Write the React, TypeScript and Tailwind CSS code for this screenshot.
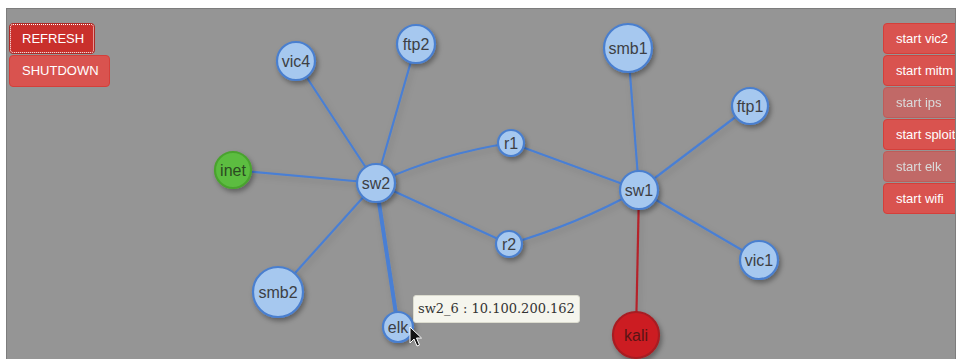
import React from 'react';

type GraphNode = { id: string; x: number; y: number; r: number; kind?: 'inet' | 'kali' };

const NODES: GraphNode[] = [
  { id: 'vic4', x: 296, y: 61, r: 19 },
  { id: 'ftp2', x: 416, y: 44, r: 19 },
  { id: 'smb1', x: 628, y: 48, r: 24 },
  { id: 'ftp1', x: 750, y: 106, r: 18 },
  { id: 'r1', x: 511, y: 143, r: 13 },
  { id: 'inet', x: 233, y: 170, r: 18, kind: 'inet' },
  { id: 'sw2', x: 376, y: 183, r: 19 },
  { id: 'sw1', x: 639, y: 190, r: 19 },
  { id: 'r2', x: 509, y: 244, r: 13 },
  { id: 'vic1', x: 759, y: 260, r: 19 },
  { id: 'smb2', x: 278, y: 292, r: 25 },
  { id: 'elk', x: 398, y: 327, r: 15 },
  { id: 'kali', x: 636, y: 335, r: 23, kind: 'kali' },
];

// [from, to, width, bend]  bend = offset of the control point along the normal
const EDGES: [string, string, number, number][] = [
  ['sw2', 'vic4', 2.2, 0],
  ['sw2', 'ftp2', 2.2, 0],
  ['sw2', 'inet', 2.2, 0],
  ['sw2', 'r1', 2.2, 10],
  ['sw2', 'r2', 2.2, 0],
  ['sw2', 'smb2', 2.2, 0],
  ['sw2', 'elk', 4, 0],
  ['sw1', 'smb1', 2.2, 0],
  ['sw1', 'ftp1', 2.2, 0],
  ['sw1', 'r1', 2.2, 0],
  ['r2', 'sw1', 2.2, -8],
  ['sw1', 'vic1', 2.2, 0],
];

const RIGHT_BUTTONS = [
  { label: 'start vic2', disabled: false },
  { label: 'start mitm', disabled: false },
  { label: 'start ips', disabled: true },
  { label: 'start sploit', disabled: false },
  { label: 'start elk', disabled: true },
  { label: 'start wifi', disabled: false },
];

const byId = (id: string) => NODES.find(n => n.id === id)!;

const edgePath = (a: GraphNode, b: GraphNode, bend: number) => {
  if (!bend) return `M${a.x} ${a.y} L${b.x} ${b.y}`;
  const dx = b.x - a.x;
  const dy = b.y - a.y;
  const len = Math.hypot(dx, dy);
  // normal pointing "left" of the direction a->b
  const nx = dy / len;
  const ny = -dx / len;
  const cx = (a.x + b.x) / 2 + nx * bend;
  const cy = (a.y + b.y) / 2 + ny * bend;
  return `M${a.x} ${a.y} Q${cx} ${cy} ${b.x} ${b.y}`;
};

const Graph: React.FC = () => {
  const sw1 = byId('sw1');
  const kali = byId('kali');
  return (
    <svg className="absolute inset-0" width={950} height={351} viewBox="7 9 950 351">
      <defs>
        <filter id="shadow" x="-50%" y="-50%" width="200%" height="200%">
          <feDropShadow dx="2" dy="3" stdDeviation="2.5" floodColor="#000" floodOpacity="0.35" />
        </filter>
        <filter id="lineShadow" x="-20%" y="-20%" width="140%" height="140%">
          <feDropShadow dx="2" dy="3" stdDeviation="3" floodColor="#000" floodOpacity="0.15" />
        </filter>
      </defs>
      <g filter="url(#lineShadow)" fill="none">
        {EDGES.map(([a, b, w, bend]) => (
          <path key={a + b} d={edgePath(byId(a), byId(b), bend)} stroke="#4a7fd4" strokeWidth={w} />
        ))}
        <line x1={sw1.x} y1={sw1.y} x2={kali.x} y2={kali.y} stroke="#b5232a" strokeWidth={2.2} />
      </g>
      {NODES.map(n => {
        const fill = n.kind === 'inet' ? '#5cbd40' : n.kind === 'kali' ? '#cc1d24' : '#a6c8ef';
        const stroke = n.kind === 'inet' ? '#4aa32f' : n.kind === 'kali' ? '#a81c20' : '#4a7fcf';
        const text = n.kind === 'inet' ? '#2b4a22' : n.kind === 'kali' ? '#5a1414' : '#3d3f44';
        return (
          <g key={n.id}>
            <circle cx={n.x} cy={n.y} r={n.r} fill={fill} stroke={stroke} strokeWidth={2.2} filter="url(#shadow)" />
            <text
              x={n.x}
              y={n.y + 5.5}
              textAnchor="middle"
              fontFamily="'Liberation Sans', Arial, sans-serif"
              fontSize={16}
              fill={text}
            >
              {n.id}
            </text>
          </g>
        );
      })}
      <path
        d="M410 327 L410 343 L414 339 L417 346 L419.5 345 L416.5 338 L421.5 338 Z"
        fill="#111"
        stroke="#fff"
        strokeWidth={1}
      />
    </svg>
  );
};

const App: React.FC = () => {
  return (
    <div className="h-[359px] w-[960px] bg-white overflow-hidden font-['Liberation_Sans',Arial,sans-serif]">
      <div className="relative ml-[6px] mt-[8px] h-[360px] w-[950px] overflow-hidden border border-[#7d7d7d] bg-[#959595]">
        <Graph />

        <div className="absolute left-[2px] top-[14px] flex flex-col gap-[1px]">
          <button className="flex h-[31px] w-[86px] items-center rounded-[4px] border border-[#ac2925] bg-[#c9302c] px-3 text-[13px] text-white outline outline-1 outline-dotted outline-offset-[-2px] outline-white">
            REFRESH
          </button>
          <button className="flex h-[32px] w-[101px] items-center rounded-[4px] border border-[#d43f3a] bg-[#d9534f] px-3 text-[13px] text-white">
            SHUTDOWN
          </button>
        </div>

        <div className="absolute left-[876px] top-[14px] flex flex-col gap-[1px]">
          {RIGHT_BUTTONS.map(b => (
            <button
              key={b.label}
              className={
                b.disabled
                  ? 'flex h-[31px] w-[90px] items-center whitespace-nowrap rounded-[4px] border border-[#d43f3a] bg-[#d9534f] px-3 text-[13px] text-white opacity-65'
                  : 'flex h-[31px] w-[90px] items-center whitespace-nowrap rounded-[4px] border border-[#d43f3a] bg-[#d9534f] px-3 text-[13px] text-white'
              }
            >
              {b.label}
            </button>
          ))}
        </div>

        <div className="absolute left-[406px] top-[286px] flex h-[28px] items-center whitespace-nowrap rounded-[3px] border border-[#dcdccf] bg-[#f5f5ed] px-[4px] font-['DejaVu_Serif',serif] text-[13px] text-[#333]">
          sw2_6 : 10.100.200.162
        </div>
      </div>
    </div>
  );
};

export default App;
